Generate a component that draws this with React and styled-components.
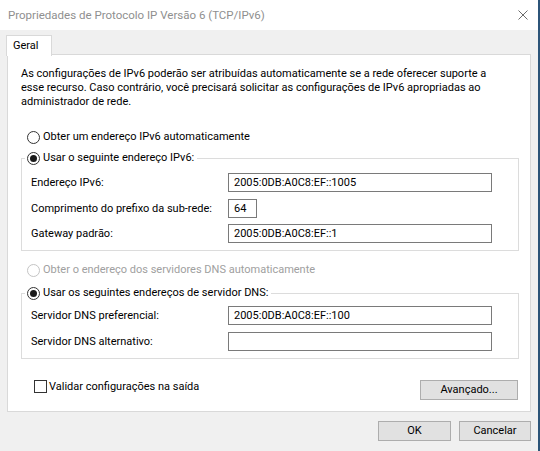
import React from 'react';
import styled, { createGlobalStyle } from 'styled-components';

const GlobalStyle = createGlobalStyle`
  html, body {
    margin: 0;
    padding: 0;
    background: #f0f0f0;
  }
  * {
    box-sizing: border-box;
  }
  body {
    font-family: Roboto, "Noto Sans", sans-serif;
    font-size: 11px;
    color: #000;
  }
`;

const Window = styled.div`
  width: 540px;
  height: 451px;
  display: flex;
  flex-direction: column;
  background: #f0f0f0;
  border-right: 2px solid #2c5478;
  overflow: hidden;
`;

const TitleBar = styled.div`
  height: 30px;
  flex: none;
  background: #fff;
  display: flex;
  align-items: center;
  justify-content: space-between;
  padding: 0 10px 1px 8px;
  color: #8f8f8f;
  font-size: 11.5px;
`;

const Body = styled.div`
  flex: 1;
  display: flex;
  flex-direction: column;
  padding: 5px 7px 0 7px;
`;

const TabStrip = styled.div`
  display: flex;
  height: 20px;
  margin-bottom: -1px;
  position: relative;
  z-index: 1;
`;

const Tab = styled.div`
  width: 46px;
  height: 21px;
  background: #fff;
  border: 1px solid #d9d9d9;
  border-bottom: none;
  padding: 2px 0 0 6px;
  line-height: 15px;
  margin-left: -1px;
`;

const Panel = styled.div`
  height: 358px;
  background: #fff;
  border: 1px solid #d9d9d9;
  padding: 12px 12px 0 13px;
  display: flex;
  flex-direction: column;
`;

const Intro = styled.p`
  margin: 0;
  line-height: 14px;
  white-space: nowrap;
`;

const RadioRow = styled.label`
  display: flex;
  align-items: center;
  height: 16px;
  line-height: 16px;
  gap: 3px;
  white-space: nowrap;
  margin-left: ${(p) => p.$indent || 0}px;
  margin-top: ${(p) => p.$top || 0}px;
  color: ${(p) => (p.$disabled ? '#a0a0a0' : '#000')};
`;

const Radio = styled.span`
  width: 13px;
  height: 13px;
  border-radius: 50%;
  border: 1px solid ${(p) => (p.$disabled ? '#c4c4c4' : '#333')};
  background: #fff;
  display: flex;
  align-items: center;
  justify-content: center;
  flex: none;

  &::after {
    content: '';
    width: 7px;
    height: 7px;
    border-radius: 50%;
    background: #1a1a1a;
    display: ${(p) => (p.$checked ? 'block' : 'none')};
  }
`;

const Group = styled.fieldset`
  margin: ${(p) => p.$top}px 0 0 0;
  border: 1px solid #dcdcdc;
  padding: ${(p) => p.$pad}px 0 7px 9px;
  min-width: 0;
  width: 498px;
  display: grid;
  grid-template-columns: 197px 1fr;
  row-gap: 6.5px;
  align-items: center;
`;

const Legend = styled.legend`
  padding: 0 3px 0 2px;
  margin-left: -6px;
`;

const FieldLabel = styled.span`
  line-height: 19px;
  white-space: nowrap;
`;

const TextBox = styled.div`
  width: ${(p) => p.$w}px;
  height: 19px;
  border: 1px solid #7a7a7a;
  background: #fff;
  padding-left: 5px;
  line-height: 17px;
`;

const BottomRow = styled.div`
  display: flex;
  align-items: flex-start;
  justify-content: space-between;
  margin-top: 21px;
  width: 497px;
`;

const CheckRow = styled.label`
  display: flex;
  align-items: center;
  gap: 2px;
  margin-left: 13px;
  height: 13px;
  line-height: 13px;
  white-space: nowrap;
`;

const CheckBox = styled.span`
  width: 13px;
  height: 13px;
  border: 1px solid #333;
  background: #fff;
  flex: none;
`;

const Button = styled.button`
  width: ${(p) => p.$w}px;
  height: 20px;
  background: #e1e1e1;
  border: 1px solid #adadad;
  font-family: inherit;
  font-size: 11px;
  color: #000;
  padding: 0;
  line-height: 16px;
`;

const Footer = styled.div`
  display: flex;
  justify-content: flex-end;
  gap: 8px;
  margin-top: 9px;
`;

function CloseIcon() {
  return (
    <svg width="10" height="10" viewBox="0 0 10 10">
      <path d="M0.5 0.5 L9.5 9.5 M9.5 0.5 L0.5 9.5" stroke="#6b6b6b" strokeWidth="1" fill="none" />
    </svg>
  );
}

export default function App() {
  return (
    <>
      <GlobalStyle />
      <Window>
        <TitleBar>
          <span>Propriedades de Protocolo IP Versão 6 (TCP/IPv6)</span>
          <CloseIcon />
        </TitleBar>
        <Body>
          <TabStrip>
            <Tab>Geral</Tab>
          </TabStrip>
          <Panel>
            <Intro>
              As configurações de IPv6 poderão ser atribuídas automaticamente se a rede oferecer suporte a
              <br />
              esse recurso. Caso contrário, você precisará solicitar as configurações de IPv6 apropriadas ao
              <br />
              administrador de rede.
            </Intro>

            <RadioRow $indent={6} $top={20}>
              <Radio />
              Obter um endereço IPv6 automaticamente
            </RadioRow>

            <Group $top={5} $pad={7}>
              <Legend>
                <RadioRow>
                  <Radio $checked />
                  Usar o seguinte endereço IPv6:
                </RadioRow>
              </Legend>
              <FieldLabel>Endereço IPv6:</FieldLabel>
              <TextBox $w={264}>2005:0DB:A0C8:EF::1005</TextBox>
              <FieldLabel>Comprimento do prefixo da sub-rede:</FieldLabel>
              <TextBox $w={29}>64</TextBox>
              <FieldLabel>Gateway padrão:</FieldLabel>
              <TextBox $w={264}>2005:0DB:A0C8:EF::1</TextBox>
            </Group>

            <RadioRow $indent={6} $top={11} $disabled>
              <Radio $disabled />
              Obter o endereço dos servidores DNS automaticamente
            </RadioRow>

            <Group $top={7} $pad={5}>
              <Legend>
                <RadioRow>
                  <Radio $checked />
                  Usar os seguintes endereços de servidor DNS:
                </RadioRow>
              </Legend>
              <FieldLabel>Servidor DNS preferencial:</FieldLabel>
              <TextBox $w={264}>2005:0DB:A0C8:EF::100</TextBox>
              <FieldLabel>Servidor DNS alternativo:</FieldLabel>
              <TextBox $w={264} />
            </Group>

            <BottomRow>
              <CheckRow>
                <CheckBox />
                Validar configurações na saída
              </CheckRow>
              <Button $w={98}>Avançado...</Button>
            </BottomRow>
          </Panel>
          <Footer>
            <Button $w={73}>OK</Button>
            <Button $w={72}>Cancelar</Button>
          </Footer>
        </Body>
      </Window>
    </>
  );
}
